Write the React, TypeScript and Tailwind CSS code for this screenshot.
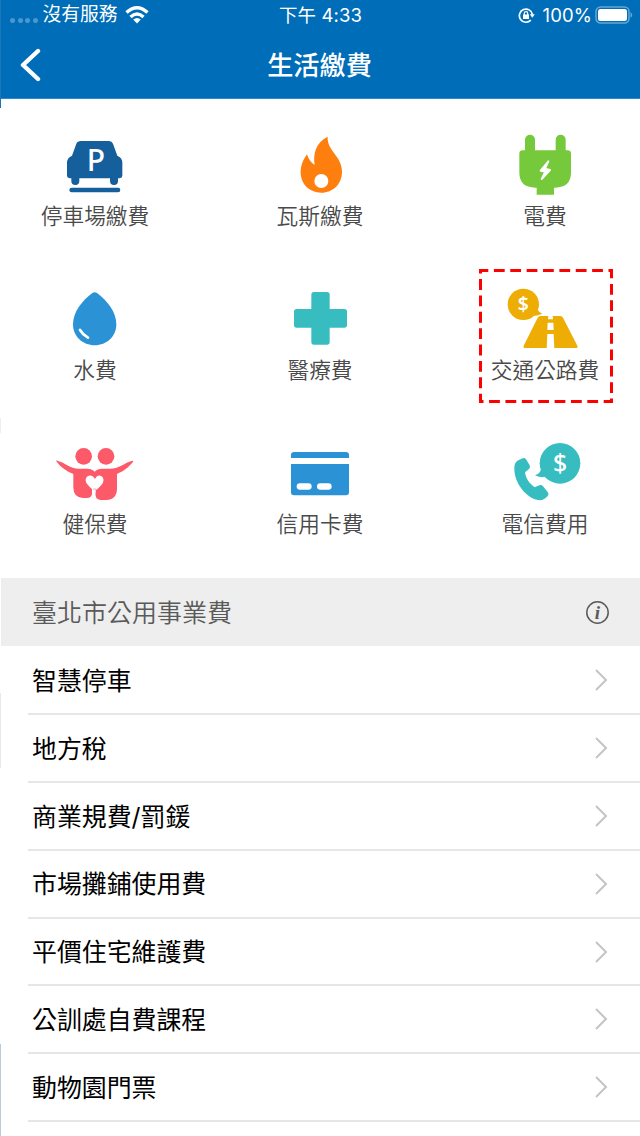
import type { FC, ReactNode } from "react";

type Service = {
  label: string;
  viewBox: string;
  icon: ReactNode;
  highlighted?: boolean;
};

const services: Service[] = [
  {
    label: "停車場繳費",
    viewBox: "0 0 390 228",
    icon: (
      <g fill="#155f9d">
        <path d="M153 63h84q9 0 12 8l13 36q15 7 15 20v40q0 7-8 8h-5v8a12 12 0 0 1-24 0v-8h-92v8a12 12 0 0 1-24 0v-8h-5q-8-1-8-8v-40q0-13 15-20l13-36q3-8 14-8z" />
        <rect x="118" y="203" width="153" height="14" rx="7" />
        <text
          x="198"
          y="153"
          fill="#fff"
          textAnchor="middle"
          className="font-['Noto_Sans'] text-[90px] font-medium"
        >
          P
        </text>
      </g>
    ),
  },
  {
    label: "瓦斯繳費",
    viewBox: "-15 0 390 228",
    icon: (
      <>
        <path
          d="M203 50C166 69 159 102 164 135Q148 125 141 103C130 118 122 136 122 157C122 193 149 218 184 218C219 218 246 192 246 155C246 107 200 92 203 50Z"
          fill="#ff7f0e"
        />
        <circle cx="184" cy="183" r="21" fill="#fff" />
      </>
    ),
  },
  {
    label: "電費",
    viewBox: "0 0 390 228",
    icon: (
      <>
        <path
          d="M135 91V59a15 15 0 0 1 30 0V91H227V59a15 15 0 0 1 30 0V91h6q10 0 10 10v56q0 46-48 46h-3v21h-52v-21h-4q-48 0-48-46v-56q0-10 10-10z"
          fill="#75c93a"
        />
        <path
          d="M205 124l-23 28 14 3-11 22 25-27-15-4z"
          fill="#fff"
          stroke="#fff"
          strokeWidth="6"
          strokeLinejoin="round"
        />
      </>
    ),
  },
  {
    label: "水費",
    viewBox: "0 -3 390 228",
    icon: (
      <>
        <path
          d="M187 54Q194 49 201 54C231 77 259 110 259 148C259 185 230 211 194 211C158 211 129 185 129 148C129 110 157 77 187 54Z"
          fill="#2b93d5"
        />
        <path
          d="M150 165Q158 179 174 188"
          fill="none"
          stroke="#fff"
          strokeWidth="8"
          strokeLinecap="round"
        />
      </>
    ),
  },
  {
    label: "醫療費",
    viewBox: "-15 -3 390 228",
    icon: (
      <path
        d="M162 51h39q8 0 8 8v43h44q8 0 8 8v40q0 8-8 8h-44v43q0 8-8 8h-39q-8 0-8-8v-43h-44q-8 0-8-8v-40q0-8 8-8h44V59q0-8 8-8z"
        fill="#37bdc0"
      />
    ),
  },
  {
    label: "交通公路費",
    viewBox: "30 42 390 228",
    highlighted: true,
    icon: (
      <>
        <g fill="#edad05">
          <circle cx="160" cy="133" r="47" />
          <path d="M203 145Q202 155 217 161Q196 170 177 167Z" />
          <path d="M211 168H271Q276 168 279 173L322 257Q325 264 317 264H168Q158 264 161 257L203 173Q206 168 211 168Z" />
        </g>
        <path
          d="M235 167h13l1 11h-15zM233 188h17l1 22h-19zM232 222h19l2 43h-23z"
          fill="#fff"
        />
        <text
          x="160"
          y="153"
          fill="#fff"
          textAnchor="middle"
          className="font-['Noto_Sans'] text-[58px] font-semibold"
        >
          $
        </text>
      </>
    ),
  },
  {
    label: "健保費",
    viewBox: "0 -6 390 228",
    icon: (
      <>
        <g fill="#fc5969">
          <circle cx="161" cy="79" r="25" />
          <circle cx="228" cy="79" r="25" />
          <path d="M79 94Q75 91 82 92C107 98 118 116 148 116H172Q186 116 194 125Q202 116 216 116H239C270 116 282 98 307 92Q312 92 308 97C294 114 281 123 261 132V175Q261 210 228 210H211Q196 208 196 192L197 178H186V191Q185 203 171 204H158Q130 202 130 171V132C109 124 92 112 79 94Z" />
        </g>
        <path
          d="M195 147C183 124 156 142 172 163Q179 173 194 183Q209 173 216 163C231 142 205 124 195 147ZM189 176h9l-2 12-1 17h-8q2-8 2-16z"
          fill="#fff"
        />
      </>
    ),
  },
  {
    label: "信用卡費",
    viewBox: "-15 -6 390 228",
    icon: (
      <>
        <path
          d="M102 66H258Q267 66 267 75V84H93V75Q93 66 102 66ZM93 102H267V187Q267 196 258 196H102Q93 196 93 187Z"
          fill="#2b93d5"
        />
        <rect x="110" y="160" width="45" height="19" rx="9.5" fill="#fff" />
        <rect x="171" y="160" width="44" height="19" rx="9.5" fill="#fff" />
      </>
    ),
  },
  {
    label: "電信費用",
    viewBox: "0 -6 390 228",
    icon: (
      <>
        <g fill="#37bdc0">
          <circle cx="240" cy="100" r="61" />
          <path d="M182 119Q181 130 165 136Q180 145 204 139Z" />
          <path d="M112 92L128 85Q135 82 139 89L149 106Q152 112 147 117L135 127C138 147 149 161 164 172L178 166Q184 163 189 169L203 186Q208 192 203 198Q191 213 174 210C139 204 103 159 103 116Q102 100 112 92Z" />
        </g>
        <text
          x="240"
          y="127"
          fill="#fff"
          textAnchor="middle"
          className="font-['Noto_Sans'] text-[74px] font-medium"
        >
          $
        </text>
      </>
    ),
  },
];

const bills = [
  "智慧停車",
  "地方稅",
  "商業規費/罰鍰",
  "市場攤鋪使用費",
  "平價住宅維護費",
  "公訓處自費課程",
  "動物園門票",
];

export default function App() {
  return (
    <div className="relative h-[1136px] w-[640px] overflow-hidden bg-white font-['Inter','Noto_Sans_CJK_TC',sans-serif]">
      <header className="h-[99px] border-b border-[#2f86c6] bg-[#006db8] text-white">
        <StatusBar />
        <TitleBar />
      </header>

      {/* Payment categories */}
      <main className="grid grid-cols-[repeat(3,130px)] gap-x-[95px] gap-y-[38px] pt-[21px] pb-[34px] pl-[30px]">
        {services.map((service) => (
          <ServiceTile key={service.label} {...service} />
        ))}
      </main>

      {/* City utilities */}
      <section>
        <div className="flex h-[68px] items-center justify-between bg-[#eeeeee] pr-[30px] pl-8 text-[25px] text-[#5a5a5a]">
          <h2 className="pt-[3px] font-[350]">臺北市公用事業費</h2>
          <InfoIcon />
        </div>
        <ul className="pt-px">
          {bills.map((bill) => (
            <li
              key={bill}
              className="ml-7 flex h-[67.9px] items-center justify-between border-b-2 border-[#e6e6e6] pr-8 pl-1 text-[24.9px] text-black"
            >
              <span className="pt-[3px]">{bill}</span>
              <svg width="14" height="24" viewBox="0 0 14 24" fill="none">
                <path d="M2 2l10 10L2 22" stroke="#c4c4c4" strokeWidth="2" />
              </svg>
            </li>
          ))}
        </ul>
      </section>

      {/* Edge of the screen underneath */}
      <div className="absolute top-0 left-0 flex h-full w-px flex-col">
        <div className="h-[108px] bg-[#1b76b9]" />
        <div className="mt-[310px] h-[15px] bg-[#eeeeee]" />
        <div className="mt-[145px] h-[115px] bg-white" />
        <div className="h-[75px] bg-[#e8e8e8]" />
        <div className="mt-[276px] grow bg-[#b9cadb]" />
      </div>
    </div>
  );
}

const StatusBar: FC = () => {
  return (
    <div className="grid h-[30px] grid-cols-3 items-center pr-[7px] pl-[10px] text-[18.8px] leading-[30px]">
      <div className="flex items-center">
        <div className="mt-[10px] mr-[5px] flex gap-[2.5px]">
          {[0, 1, 2, 3].map((dot) => (
            <i key={dot} className="size-[5px] rounded-full bg-[#4a98cf]" />
          ))}
        </div>
        <span>沒有服務</span>
        <svg
          className="ml-[7px]"
          width="24"
          height="18"
          viewBox="0 0 24 18"
          fill="none"
          stroke="#fff"
          strokeWidth="3.4"
        >
          <path d="M1.5 6.6Q12-3 22.5 6.6M5.5 11Q12 5 18.5 11" />
          <path d="M8.2 13.5Q12 10.5 15.8 13.5L12 17.5z" fill="#fff" stroke="none" />
        </svg>
      </div>
      <div className="pr-[2px] text-center text-[18.5px] tracking-[0.1px]">
        下午 4:33
      </div>
      <div className="flex items-center justify-end">
        <svg
          className="mr-2"
          width="17"
          height="17"
          viewBox="0 0 17 17"
          fill="none"
          stroke="#fff"
          strokeWidth="1.7"
        >
          <path d="M12.8 13.2A6.6 6.6 0 1 1 14.5 7.5" />
          <path d="M11.8 7.2h5l-2.5 3.5z" fill="#fff" stroke="none" />
          <path d="M5 7.5h6v4.5H5z" fill="#fff" stroke="none" />
          <path d="M6.3 8V6.3a1.7 1.7 0 0 1 3.4 0V8" strokeWidth="1.2" />
        </svg>
        <span className="mr-[3px] text-[18.5px] tracking-[0.1px]">100%</span>
        <svg width="38" height="18" viewBox="0 0 38 18">
          <rect
            x="1"
            y="1"
            width="33"
            height="16"
            rx="4.5"
            fill="none"
            stroke="#66a7d4"
            strokeWidth="1.5"
          />
          <rect x="3" y="3" width="29" height="12" rx="2.5" fill="#fff" />
          <path d="M35.5 6Q39 9 35.5 12z" fill="#66a7d4" />
        </svg>
      </div>
    </div>
  );
};

const TitleBar: FC = () => {
  return (
    <div className="grid h-[69px] grid-cols-[1fr_auto_1fr] items-center pl-5">
      <svg width="22" height="34" viewBox="0 0 22 34" fill="none">
        <path
          d="M18 3L3 17l15 14"
          stroke="#fff"
          strokeWidth="4.4"
          strokeLinecap="round"
          strokeLinejoin="round"
        />
      </svg>
      <h1 className="-ml-[21px] pt-[3px] text-[26.2px] font-medium">
        生活繳費
      </h1>
    </div>
  );
};

const ServiceTile: FC<Service> = ({ label, viewBox, icon, highlighted }) => {
  return (
    <div className="relative h-[116px]">
      <svg width="130" height="76" viewBox={viewBox}>
        {icon}
      </svg>
      <p className="h-10 text-center text-[21.7px] leading-10 font-[350] whitespace-nowrap text-[#4a4a4a]">
        {label}
      </p>
      {highlighted && (
        <svg
          className="absolute -top-[5px] -left-px"
          width="134"
          height="134"
          viewBox="0 0 134 134"
        >
          <rect
            x="1.5"
            y="1.5"
            width="131"
            height="131"
            fill="none"
            stroke="#ff0000"
            strokeWidth="3"
            strokeDasharray="10.8 5.575"
            strokeDashoffset="3"
          />
        </svg>
      )}
    </div>
  );
};

const InfoIcon: FC = () => {
  return (
    <svg width="25" height="25" viewBox="0 0 25 25">
      <circle
        cx="12.5"
        cy="12.5"
        r="10.7"
        fill="none"
        stroke="#5a5a5a"
        strokeWidth="1.5"
      />
      <text
        x="12.5"
        y="18.5"
        fill="#5a5a5a"
        textAnchor="middle"
        className="font-['Liberation_Serif'] text-[19px] font-bold italic"
      >
        i
      </text>
    </svg>
  );
};
